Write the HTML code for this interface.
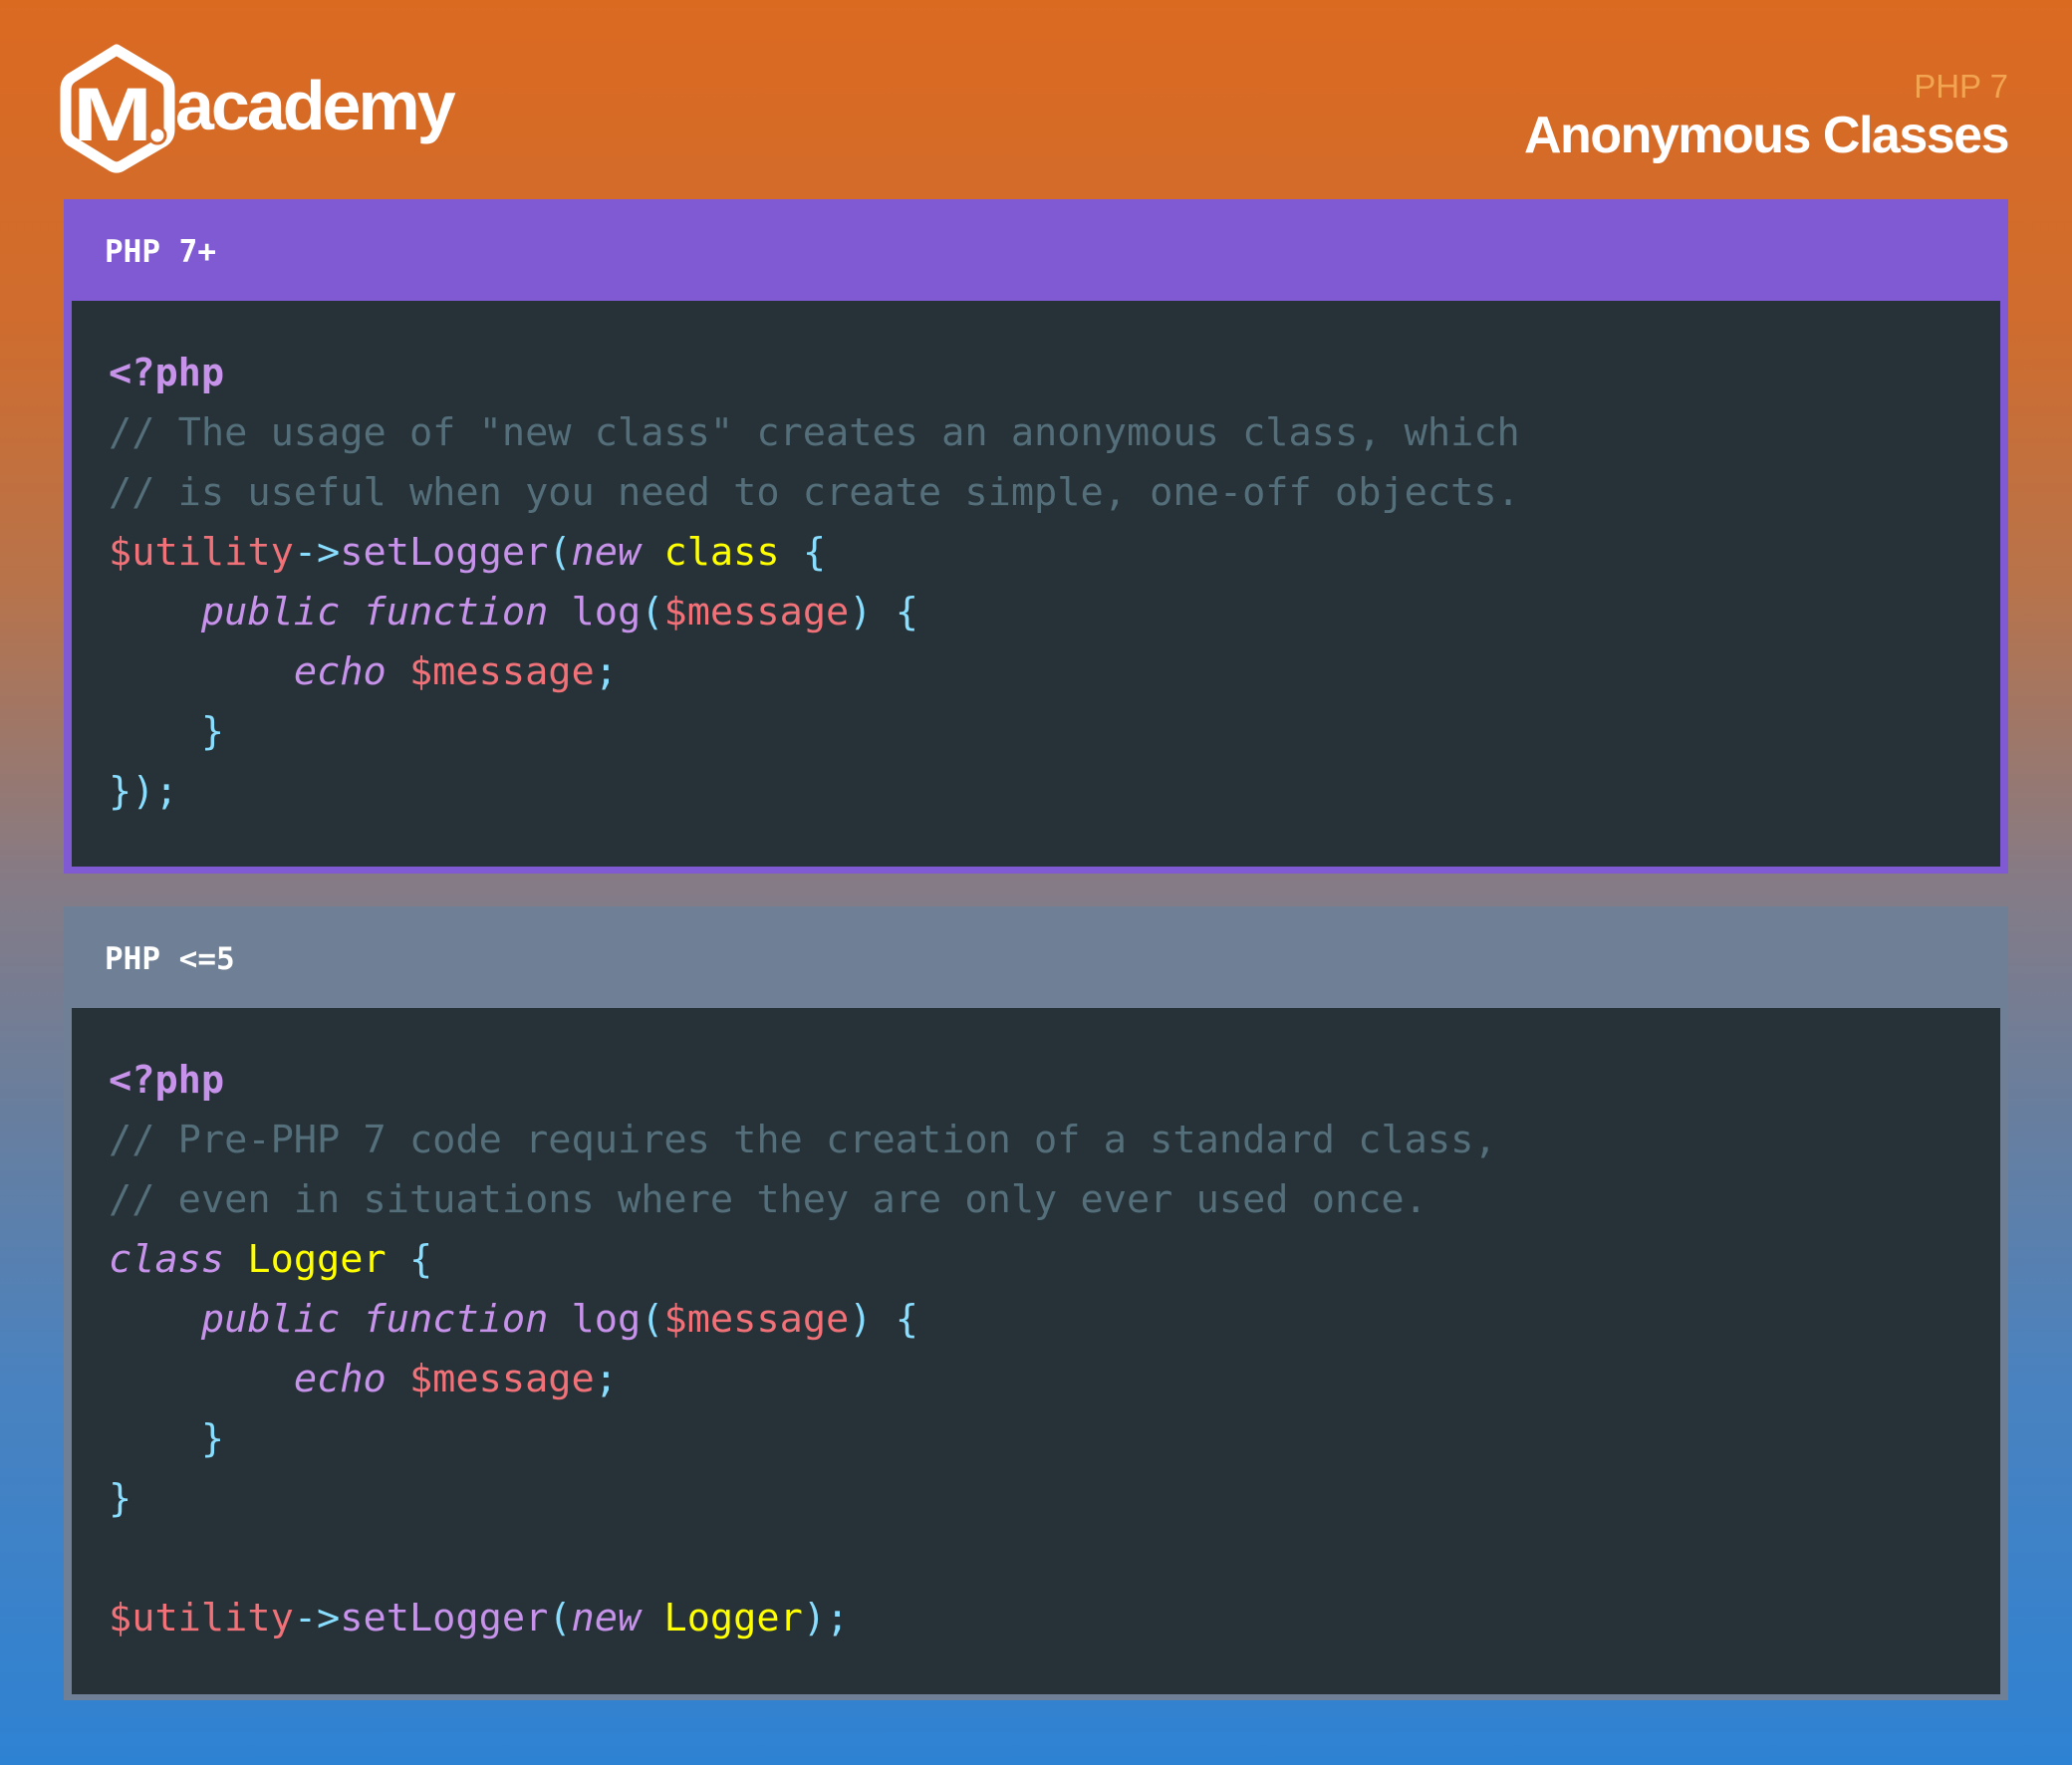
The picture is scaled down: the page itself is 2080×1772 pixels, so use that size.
<!DOCTYPE html>
<html><head><meta charset="utf-8"><style>
*{margin:0;padding:0;box-sizing:border-box}
body{width:2080px;height:1772px;overflow:hidden;background:linear-gradient(180deg,#db6a21 0%,#cf6c2e 18%,#b8734a 33%,#857b86 50%,#6a7e9c 62%,#4a82bf 78%,#2e82d3 100%);font-family:"Liberation Sans",sans-serif;position:relative}
.logo{position:absolute;left:60px;top:44px}
.acad{position:absolute;left:176px;top:66px;font-size:70px;font-weight:bold;color:#fff;letter-spacing:-3px}
.sub{position:absolute;right:64px;top:68px;font-size:33px;color:#f3a451}
.title{position:absolute;right:64px;top:106px;font-size:52px;font-weight:bold;color:#fff;letter-spacing:-1.5px}
.box{position:absolute;left:64px;width:1952px;border:8px solid;border-top:0}
.hd{height:102px;margin:0 -8px;padding-left:41px;line-height:106px;font-family:"DejaVu Sans Mono",monospace;font-weight:bold;font-size:31px;color:#fff}
.code{background:#263238;padding:43px 0 0 37px;font-family:"DejaVu Sans Mono","Liberation Mono",monospace;font-size:38.6px;line-height:60px;white-space:pre;color:#eeffff}
.b1{top:200px;height:677px;border-color:#7f5ad3}
.b1 .hd{background:#7f5ad3}
.b1 .code{height:568px}
.b2{top:910px;height:797px;border-color:#6f7f96}
.b2 .hd{background:#6f7f96}
.b2 .code{height:689px}
.k{color:#c792ea;font-weight:bold}.c{color:#546e7a}.v{color:#f07178}.p{color:#89ddff}.f{color:#c792ea}.i{color:#c792ea;font-style:italic}.y{color:#ffff00}
</style></head><body>
<svg class="logo" width="120" height="132" viewBox="0 0 120 132">
<path d="M57 6 L104 34 Q110 38 110 46 L110 86 Q110 94 104 98 L63 122 Q57 126 51 122 L12 98 Q6 94 6 86 L6 46 Q6 38 12 34 Z" fill="none" stroke="#fff" stroke-width="11" stroke-linejoin="round"/>
<text x="13" y="97" font-family="Liberation Sans" font-weight="bold" font-size="76" fill="#fff" textLength="80" lengthAdjust="spacingAndGlyphs">M</text>
<circle cx="98" cy="92" r="8" fill="#fff" stroke="#d56a2a" stroke-width="3"/>
</svg>
<div class="acad">academy</div>
<div class="sub">PHP 7</div>
<div class="title">Anonymous Classes</div>
<div class="box b1"><div class="hd">PHP 7+</div><div class="code"><span class="k">&lt;?php</span>
<span class="c">// The usage of "new class" creates an anonymous class, which</span>
<span class="c">// is useful when you need to create simple, one-off objects.</span>
<span class="v">$utility</span><span class="p">-&gt;</span><span class="f">setLogger</span><span class="p">(</span><span class="i">new</span> <span class="y">class</span> <span class="p">{</span>
    <span class="i">public</span> <span class="i">function</span> <span class="f">log</span><span class="p">(</span><span class="v">$message</span><span class="p">)</span> <span class="p">{</span>
        <span class="i">echo</span> <span class="v">$message</span><span class="p">;</span>
    <span class="p">}</span>
<span class="p">});</span></div></div>
<div class="box b2"><div class="hd">PHP &lt;=5</div><div class="code"><span class="k">&lt;?php</span>
<span class="c">// Pre-PHP 7 code requires the creation of a standard class,</span>
<span class="c">// even in situations where they are only ever used once.</span>
<span class="i">class</span> <span class="y">Logger</span> <span class="p">{</span>
    <span class="i">public</span> <span class="i">function</span> <span class="f">log</span><span class="p">(</span><span class="v">$message</span><span class="p">)</span> <span class="p">{</span>
        <span class="i">echo</span> <span class="v">$message</span><span class="p">;</span>
    <span class="p">}</span>
<span class="p">}</span>

<span class="v">$utility</span><span class="p">-&gt;</span><span class="f">setLogger</span><span class="p">(</span><span class="i">new</span> <span class="y">Logger</span><span class="p">);</span></div></div>
</body></html>
